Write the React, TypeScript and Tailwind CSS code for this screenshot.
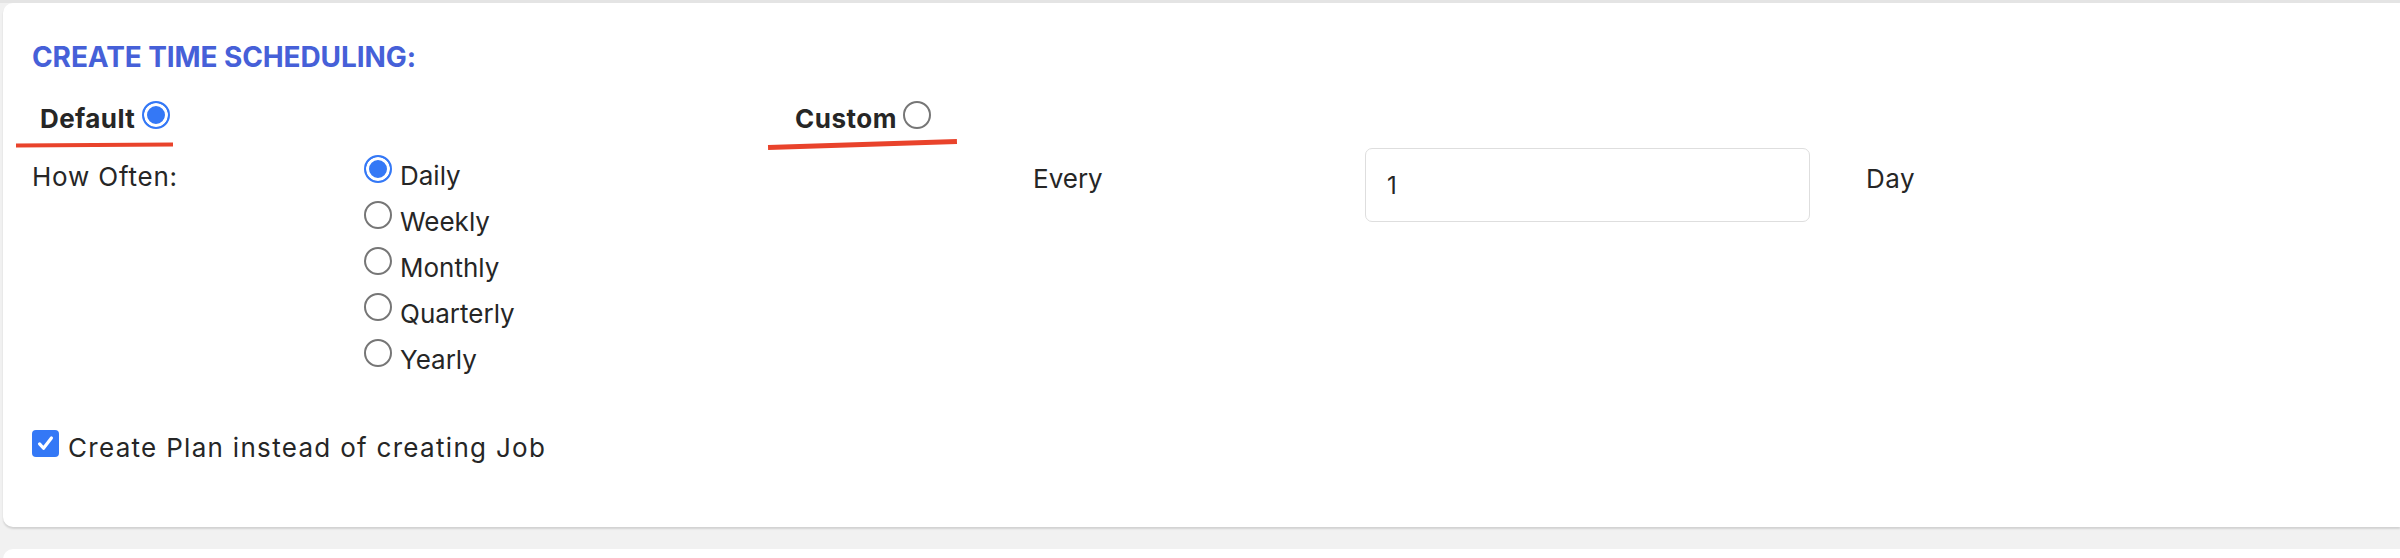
import React, { useState } from 'react';

const frequencies = ['Daily', 'Weekly', 'Monthly', 'Quarterly', 'Yearly'];

const Radio = ({ checked, onChange }: { checked: boolean; onChange: () => void }) => (
    <input
        type="radio"
        checked={checked}
        onChange={onChange}
        className="appearance-none shrink-0 w-[28px] h-[28px] rounded-full border-2 border-[#767676] bg-white checked:border-[#3478f6] checked:bg-[#3478f6] checked:shadow-[inset_0_0_0_3px_#fff] outline-none"
    />
);

export default function App() {
    const [mode, setMode] = useState<'default' | 'custom'>('default');
    const [often, setOften] = useState('Daily');
    const [every, setEvery] = useState('1');
    const [createPlan, setCreatePlan] = useState(true);

    return (
        <div className="min-h-[558px] bg-[#f1f1f1] font-['Inter','Noto_Sans',sans-serif] text-[#262626]">
            <div className="h-[3px] bg-[#e4e4e4]" />
            <div className="pl-[3px]">
                {/* Scheduling card */}
                <div className="h-[524px] bg-white rounded-l-[10px] shadow-[0_2px_2px_rgba(0,0,0,0.13)] pt-[34px] pl-[29px]">
                    <h2 className="text-[28px] leading-[40px] font-bold text-[#4660d8] tracking-[-0.1px]">CREATE TIME SCHEDULING:</h2>

                    {/* Default / Custom */}
                    <div className="flex h-[49px] mt-[22px] -ml-[16px]">
                        <div className="w-[752px]">
                            <label className="flex items-start gap-[7px] pl-[24px] cursor-pointer">
                                <span className="text-[26px] leading-[40px] font-bold tracking-[0.4px]">Default</span>
                                <span className="mt-[2px]">
                                    <Radio checked={mode === 'default'} onChange={() => setMode('default')} />
                                </span>
                            </label>
                            <div className="mt-[4px] w-[157px] h-[4px] bg-[#e9432b] -rotate-[0.3deg]" />
                        </div>
                        <div>
                            <label className="flex items-start gap-[6px] pl-[27px] cursor-pointer">
                                <span className="text-[26px] leading-[40px] font-bold tracking-[0.5px]">Custom</span>
                                <span className="mt-[2px]">
                                    <Radio checked={mode === 'custom'} onChange={() => setMode('custom')} />
                                </span>
                            </label>
                            <div className="mt-[3px] w-[189px] h-[5px] bg-[#e9432b] -rotate-[1.8deg]" />
                        </div>
                    </div>

                    {/* How often */}
                    <div className="flex text-[26px] leading-[40px]">
                        <div className="w-[332px] pt-[9px] tracking-[0.8px]">How Often:</div>
                        <div className="w-[669px] pt-[7px]">
                            {frequencies.map(f => (
                                <label key={f} className="flex items-start gap-[8px] h-[46px] cursor-pointer">
                                    <Radio checked={often === f} onChange={() => setOften(f)} />
                                    <span className="mt-[1px]">{f}</span>
                                </label>
                            ))}
                        </div>
                        <div className="w-[332px] pt-[11px]">Every</div>
                        <input
                            type="text"
                            value={every}
                            onChange={e => setEvery(e.target.value)}
                            className="w-[445px] h-[74px] border border-[#dedede] rounded-[7px] pl-[21px] text-[24px] outline-none"
                        />
                        <div className="ml-[56px] pt-[11px] tracking-[0.5px]">Day</div>
                    </div>

                    {/* Plan checkbox */}
                    <label className="flex items-start gap-[9px] mt-[43px] text-[26px] leading-[40px] cursor-pointer">
                        <span
                            onClick={() => setCreatePlan(!createPlan)}
                            className={`mt-[1.5px] w-[27px] h-[27px] rounded-[4px] flex items-center justify-center ${createPlan ? 'bg-[#3478f6]' : 'border-2 border-[#767676] bg-white'}`}
                        >
                            {createPlan && (
                                <svg width="19" height="19" viewBox="0 0 24 24" fill="none" stroke="#fff" strokeWidth="4" strokeLinecap="round" strokeLinejoin="round">
                                    <path d="M4.5 12.5l5 5.5L19.5 5" />
                                </svg>
                            )}
                        </span>
                        <span className="tracking-[1.3px]">Create Plan instead of creating Job</span>
                    </label>
                </div>

                <div className="mt-[22px] h-[12px] bg-white rounded-tl-[10px]" />
            </div>
        </div>
    );
}
